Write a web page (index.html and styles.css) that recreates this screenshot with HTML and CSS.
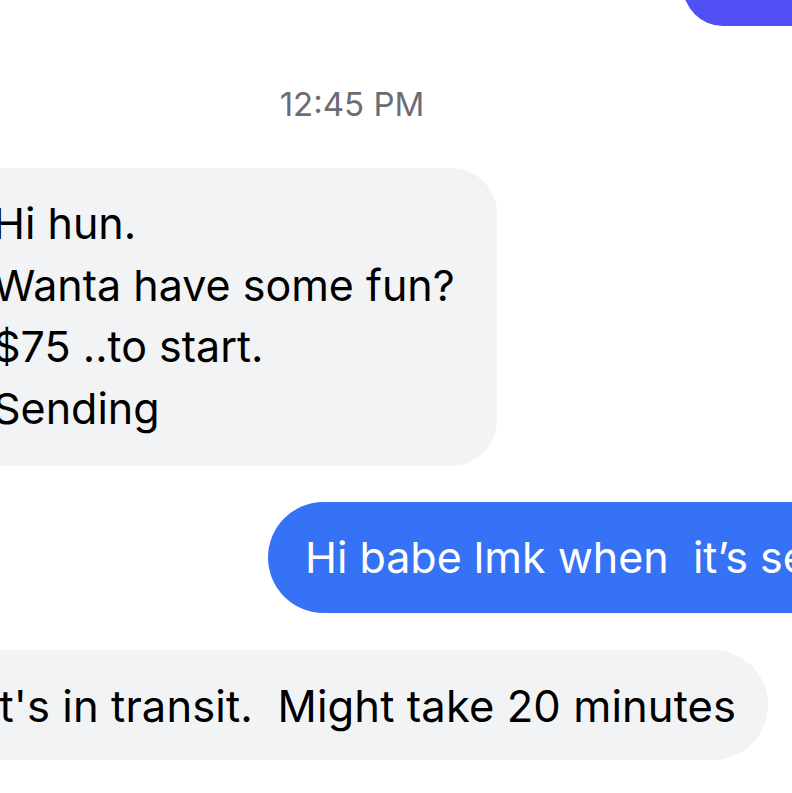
FILE: index.html
```html
<!DOCTYPE html>
<html>
<head>
<meta charset="utf-8">
<link rel="stylesheet" href="styles.css">
</head>
<body>
<div class="chat">
  <div class="bubble-top"></div>
  <div class="time">12:45 PM</div>
  <div class="bubble in multi">
    <div class="line">Hi hun.</div>
    <div class="line">Wanta have some fun?</div>
    <div class="line">$75 ..to start.</div>
    <div class="line">Sending</div>
  </div>
  <div class="bubble out">Hi babe lmk when&nbsp; it’s sent</div>
  <div class="bubble in single">It's in transit.&nbsp; Might take 20 minutes</div>
</div>
</body>
</html>
```
FILE: styles.css
```css
html, body {
  margin: 0;
  padding: 0;
  background: #ffffff;
}
.chat {
  width: 792px;
  height: 793px;
  overflow: hidden;
  display: flex;
  flex-direction: column;
  font-family: Inter, "Noto Sans", sans-serif;
  color: #000;
}
.bubble-top {
  align-self: flex-end;
  width: 150px;
  height: 80px;
  margin-top: -54px;
  margin-right: -41px;
  background: #5150f7;
  border-radius: 42px;
}
.time {
  margin-top: 60px;
  padding-right: 88px;
  text-align: center;
  font-size: 33px;
  line-height: 36px;
  color: #6c6c75;
}
.bubble {
  font-size: 43px;
  white-space: nowrap;
}
.in {
  background: #f2f3f5;
  align-self: flex-start;
}
.multi {
  margin-top: 46px;
  margin-left: -60px;
  width: 557px;
  box-sizing: border-box;
  height: 298px;
  border-radius: 46px;
  padding: 25px 0 0 53px;
}
.line {
  height: 61.5px;
  line-height: 61.5px;
}
.out {
  margin-top: 36px;
  align-self: flex-end;
  margin-right: -100px;
  width: 624px;
  box-sizing: border-box;
  height: 111px;
  border-radius: 56px;
  background: #3672f5;
  color: #fff;
  padding-left: 37px;
  line-height: 111px;
  overflow: hidden;
}
.single {
  margin-top: 37px;
  margin-left: -60px;
  width: 828px;
  box-sizing: border-box;
  height: 110px;
  border-radius: 55px;
  line-height: 112px;
  padding-left: 47px;
  font-size: 43.5px;
  letter-spacing: 0.1px;
  overflow: hidden;
}
```
